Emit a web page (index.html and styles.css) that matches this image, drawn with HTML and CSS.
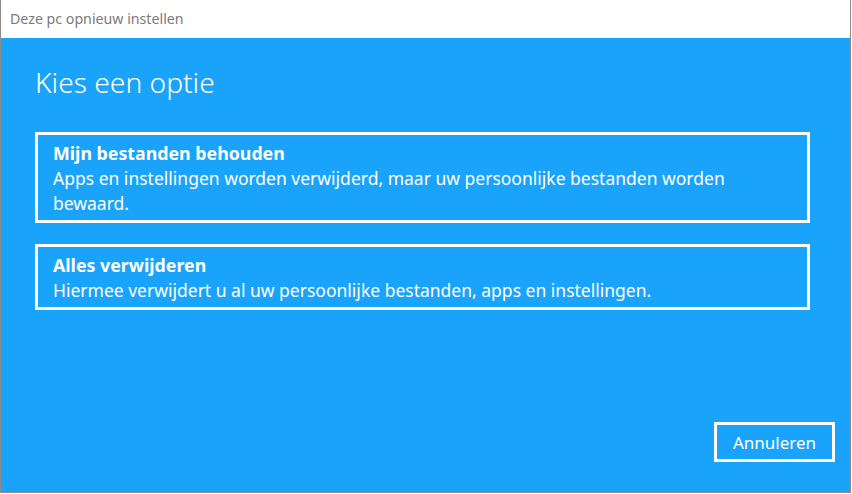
FILE: index.html
```html
<!DOCTYPE html>
<html lang="nl">
<head>
<meta charset="utf-8">
<title>Deze pc opnieuw instellen</title>
<link rel="stylesheet" href="styles.css">
</head>
<body>
<div class="window">
  <div class="titlebar">Deze pc opnieuw instellen</div>
  <div class="content">
    <h1 class="heading">Kies een optie</h1>
    <div class="options">
      <div class="option">
        <div class="option-title">Mijn bestanden behouden</div>
        <div class="option-desc">Apps en instellingen worden verwijderd, maar uw persoonlijke bestanden worden bewaard.</div>
      </div>
      <div class="option">
        <div class="option-title">Alles verwijderen</div>
        <div class="option-desc">Hiermee verwijdert u al uw persoonlijke bestanden, apps en instellingen.</div>
      </div>
    </div>
    <div class="footer">
      <button class="cancel">Annuleren</button>
    </div>
  </div>
</div>
</body>
</html>
```

FILE: styles.css
```css
html, body {
  margin: 0;
  padding: 0;
  background: #ffffff;
}
body {
  font-family: "Noto Sans", "Open Sans", sans-serif;
}
.window {
  width: 849px;
  height: 492px;
  border-left: 1px solid #8c8c8c;
  border-right: 1px solid #8c8c8c;
  border-bottom: 1px solid #8c8c8c;
  display: flex;
  flex-direction: column;
  background: #19a3fb;
}
.titlebar {
  height: 38px;
  flex: none;
  background: #ffffff;
  color: #7a7a7a;
  font-size: 14.2px;
  line-height: 38px;
  padding-left: 9px;
  box-sizing: border-box;
}
.content {
  flex: 1;
  display: flex;
  flex-direction: column;
  padding: 0 15px 0 34px;
  color: #ffffff;
}
.heading {
  margin: 26px 0 0 0;
  font-size: 28.2px;
  font-weight: 300;
  line-height: 36px;
}
.options {
  margin-top: 32px;
  display: flex;
  flex-direction: column;
  gap: 21px;
}
.option {
  border: 3px solid #ffffff;
  padding: 6px 40px 4px 15px;
  width: 775px;
  box-sizing: border-box;
}
.option-title {
  font-size: 17.8px;
  font-weight: 700;
  line-height: 25px;
}
.option-desc {
  font-size: 17.5px;
  line-height: 25px;
}
.footer {
  margin-top: auto;
  display: flex;
  justify-content: flex-end;
  padding-bottom: 30px;
}
.cancel {
  width: 121px;
  height: 40px;
  background: transparent;
  border: 3px solid #ffffff;
  color: #ffffff;
  font-family: "Noto Sans", "Open Sans", sans-serif;
  font-size: 17px;
  padding: 0;
}
```
